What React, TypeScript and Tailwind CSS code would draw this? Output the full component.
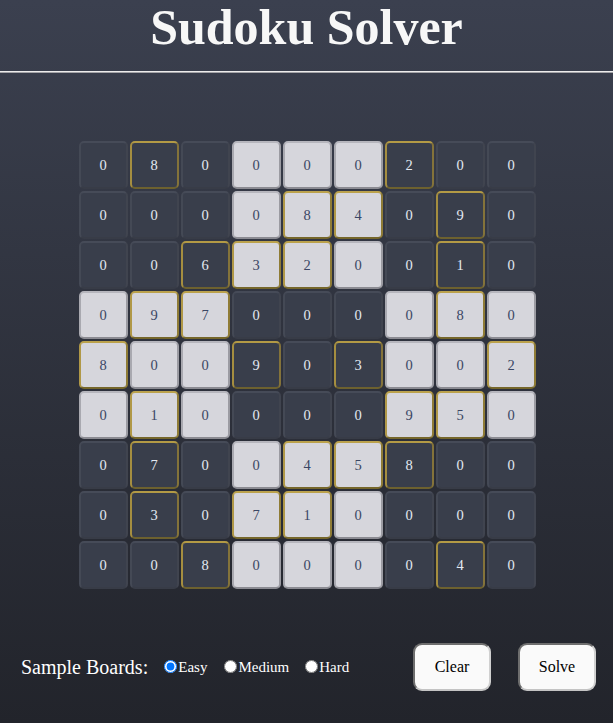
import React from "react";

const board: number[][] = [
  [0, 8, 0, 0, 0, 0, 2, 0, 0],
  [0, 0, 0, 0, 8, 4, 0, 9, 0],
  [0, 0, 6, 3, 2, 0, 0, 1, 0],
  [0, 9, 7, 0, 0, 0, 0, 8, 0],
  [8, 0, 0, 9, 0, 3, 0, 0, 2],
  [0, 1, 0, 0, 0, 0, 9, 5, 0],
  [0, 7, 0, 0, 4, 5, 8, 0, 0],
  [0, 3, 0, 7, 1, 0, 0, 0, 0],
  [0, 0, 8, 0, 0, 0, 0, 4, 0],
];

function Cell({ v, light }: { v: number; light: boolean }) {
  const gold = v !== 0;
  let cls =
    "w-[49px] h-[48px] rounded-[5px] border-2 flex items-center justify-center text-[14.5px] leading-none ";
  if (light) {
    cls += "bg-[#d6d6dc] text-[#3a4664] ";
    cls += gold
      ? "border-t-[#bba24c] border-l-[#b09847] border-r-[#8f7c36] border-b-[#76672b]"
      : "border-t-[#b6b6bd] border-l-[#a9a9b0] border-r-[#9b9ba2] border-b-[#8b8b92]";
  } else {
    cls += "bg-[#393e4b] text-[#e3e9f2] ";
    cls += gold
      ? "border-t-[#b39a45] border-l-[#a58e40] border-r-[#84733a] border-b-[#6d612f]"
      : "border-t-[#464b58] border-l-[#444955] border-r-[#40444f] border-b-[#383c47]";
  }
  return <div className={cls}>{v}</div>;
}

export default function App() {
  return (
    <div
      className="min-h-screen w-full bg-gradient-to-b from-[#3b404f] to-[#22242b] text-white"
      style={{ fontFamily: '"Liberation Serif", "Times New Roman", serif' }}
    >
      <div className="h-[71px] pt-[2px] text-center text-[50px] leading-[50px] font-bold text-[#f7f7f7]">
        Sudoku Solver
      </div>
      <div className="h-px bg-[#ececec]" />
      <div className="h-px bg-[#a4a4a8]" />

      <div className="mt-[68px] flex justify-center pl-[1px]">
        <div className="grid grid-cols-9 gap-x-[2px] gap-y-[2px]">
          {board.map((row, r) =>
            row.map((v, c) => (
              <Cell
                key={`${r}-${c}`}
                v={v}
                light={(Math.floor(r / 3) + Math.floor(c / 3)) % 2 === 1}
              />
            ))
          )}
        </div>
      </div>

      <div className="mt-[54px] flex items-center pl-[21px] pr-[17px]">
        <span className="text-[20px] text-white">Sample Boards:</span>
        <label className="ml-[16px] flex items-center text-[15px] text-white">
          <input
            type="radio"
            name="board"
            defaultChecked
            className="w-[13px] h-[13px] mr-px mb-[2px] accent-[#0075ff]"
          />
          Easy
        </label>
        <label className="ml-[17px] flex items-center text-[15px] text-white">
          <input
            type="radio"
            name="board"
            className="w-[13px] h-[13px] mr-px mb-[2px]"
          />
          Medium
        </label>
        <label className="ml-[16px] flex items-center text-[15px] text-white">
          <input
            type="radio"
            name="board"
            className="w-[13px] h-[13px] mr-px mb-[2px]"
          />
          Hard
        </label>
        <div className="ml-auto flex items-center gap-[27px]">
          <button className="w-[78px] h-[48px] rounded-[9px] bg-[#fafafa] text-black text-[16px] border-2 border-t-[#6e6e6e] border-l-[#6e6e6e] border-r-[#d0d0d0] border-b-[#c4c4c4]">
            Clear
          </button>
          <button className="w-[78px] h-[48px] rounded-[9px] bg-[#fafafa] text-black text-[16px] border-2 border-t-[#6e6e6e] border-l-[#6e6e6e] border-r-[#d0d0d0] border-b-[#c4c4c4]">
            Solve
          </button>
        </div>
      </div>
    </div>
  );
}
